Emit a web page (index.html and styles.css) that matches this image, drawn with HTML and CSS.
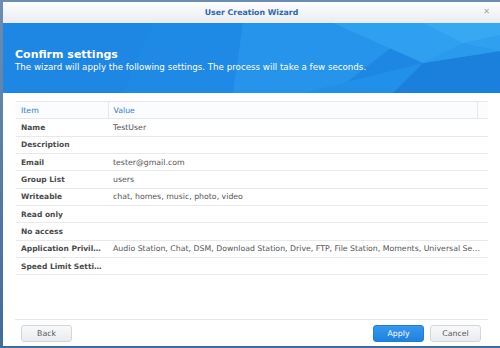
FILE: index.html
```html
<!DOCTYPE html>
<html lang="en">
<head>
    <meta charset="UTF-8">
    <title>User Creation Wizard</title>
    <link rel="stylesheet" href="styles.css">
</head>
<body>
    <div class="dialog">
        <div class="titlebar">
            <span class="title">User Creation Wizard</span>
            <span class="close">&#x2715;</span>
        </div>

        <div class="banner">
            <svg class="facets" viewBox="0 0 497 70" preserveAspectRatio="none">
                <polygon points="150,0 330,0 260,70 120,70" fill="#1f8ae6"/>
                <polygon points="240,0 420,0 330,70 230,70" fill="#2594ea"/>
                <polygon points="330,0 497,0 497,28 420,40" fill="#2ea0ef"/>
                <polygon points="390,70 420,40 497,28 497,70" fill="#1b7fdc"/>
                <polygon points="300,70 420,40 390,70" fill="#2190e8"/>
                <polygon points="420,0 497,0 497,12 460,20" fill="#38a8f2"/>
                <polygon points="420,40 460,20 497,28" fill="#2a9aec"/>
            </svg>
            <div class="banner-text">
                <h1>Confirm settings</h1>
                <p>The wizard will apply the following settings. The process will take a few seconds.</p>
            </div>
        </div>

        <div class="content">
            <table class="grid">
                <colgroup>
                    <col class="col-item">
                    <col>
                    <col class="col-scroll">
                </colgroup>
                <thead>
                    <tr>
                        <th>Item</th>
                        <th>Value</th>
                        <th></th>
                    </tr>
                </thead>
                <tbody>
                    <tr><td>Name</td><td colspan="2">TestUser</td></tr>
                    <tr><td>Description</td><td colspan="2"></td></tr>
                    <tr><td>Email</td><td colspan="2">tester@gmail.com</td></tr>
                    <tr><td>Group List</td><td colspan="2">users</td></tr>
                    <tr><td>Writeable</td><td colspan="2">chat, homes, music, photo, video</td></tr>
                    <tr><td>Read only</td><td colspan="2"></td></tr>
                    <tr><td>No access</td><td colspan="2"></td></tr>
                    <tr><td>Application Privileges</td><td colspan="2">Audio Station, Chat, DSM, Download Station, Drive, FTP, File Station, Moments, Universal Search, Video Station</td></tr>
                    <tr><td>Speed Limit Settings</td><td colspan="2"></td></tr>
                </tbody>
            </table>
        </div>

        <div class="footer">
            <button class="btn">Back</button>
            <div class="actions">
                <button class="btn btn-primary">Apply</button>
                <button class="btn">Cancel</button>
            </div>
        </div>
    </div>
</body>
</html>
```

FILE: styles.css
```css
html, body {
    margin: 0;
    height: 100%;
}
body {
    background: linear-gradient(#6d8db0, #3f6c9e);
    font-family: 'DejaVu Sans', Verdana, sans-serif;
    font-size: 7.5px;
    color: #555;
    overflow: hidden;
}
.dialog {
    margin: 2px 0 0 3px;
    height: 344px;
    background: white;
    display: flex;
    flex-direction: column;
}
.titlebar {
    position: relative;
    height: 21px;
    background: linear-gradient(#fdfdfe, #e9edf1);
    display: flex;
    align-items: center;
    justify-content: center;
}
.title {
    font-weight: bold;
    color: #3267a8;
    font-size: 7.8px;
}
.close {
    position: absolute;
    right: 10px;
    top: 5px;
    font-size: 8px;
    color: #a0a6ad;
}
.banner {
    position: relative;
    height: 70px;
    background: #1e86e3;
    overflow: hidden;
}
.facets {
    position: absolute;
    left: 0;
    top: 0;
    width: 100%;
    height: 100%;
}
.banner-text {
    position: relative;
    padding: 25px 0 0 12px;
    color: white;
}
.banner-text h1 {
    margin: 0;
    font-size: 11px;
    line-height: 13px;
}
.banner-text p {
    margin: 0;
    font-size: 8.7px;
    line-height: 12px;
}
.content {
    flex: 1;
    padding: 8px 12px 0 13px;
}
.grid {
    width: 100%;
    border-collapse: collapse;
    table-layout: fixed;
    border-top: 1px solid #e4e6e8;
}
.col-item {
    width: 92px;
}
.col-scroll {
    width: 11px;
}
.grid th,
.grid td {
    height: 16.35px;
    padding: 0 5px;
    border-bottom: 1px solid #e8e9eb;
    white-space: nowrap;
    overflow: hidden;
    text-overflow: ellipsis;
    text-align: left;
}
.grid th {
    font-weight: normal;
    font-size: 7.8px;
    color: #3a7ac4;
    background: #fbfcfd;
    border-right: 1px solid #e6e8ea;
}
.grid th:last-child {
    border-right: none;
}
.grid td {
    font-size: 7.8px;
}
.grid td:first-child {
    font-size: 7.5px;
    font-weight: bold;
    color: #4a4a4a;
}
.footer {
    margin: 0 12px 0 12px;
    border-top: 1px solid #e4e6e8;
    padding: 5px 7px 4px 6px;
    display: flex;
    justify-content: space-between;
}
.actions {
    display: flex;
    gap: 6px;
}
.btn {
    width: 51px;
    height: 17px;
    padding: 0;
    font-family: inherit;
    font-size: 7.8px;
    color: #555;
    background: linear-gradient(#f8f9fa, #e9ecef);
    border: 1px solid #d3d7db;
    border-radius: 3px;
}
.btn-primary {
    color: white;
    background: linear-gradient(#3597ee, #1f82e0);
    border-color: #1f7fd8;
}
```
